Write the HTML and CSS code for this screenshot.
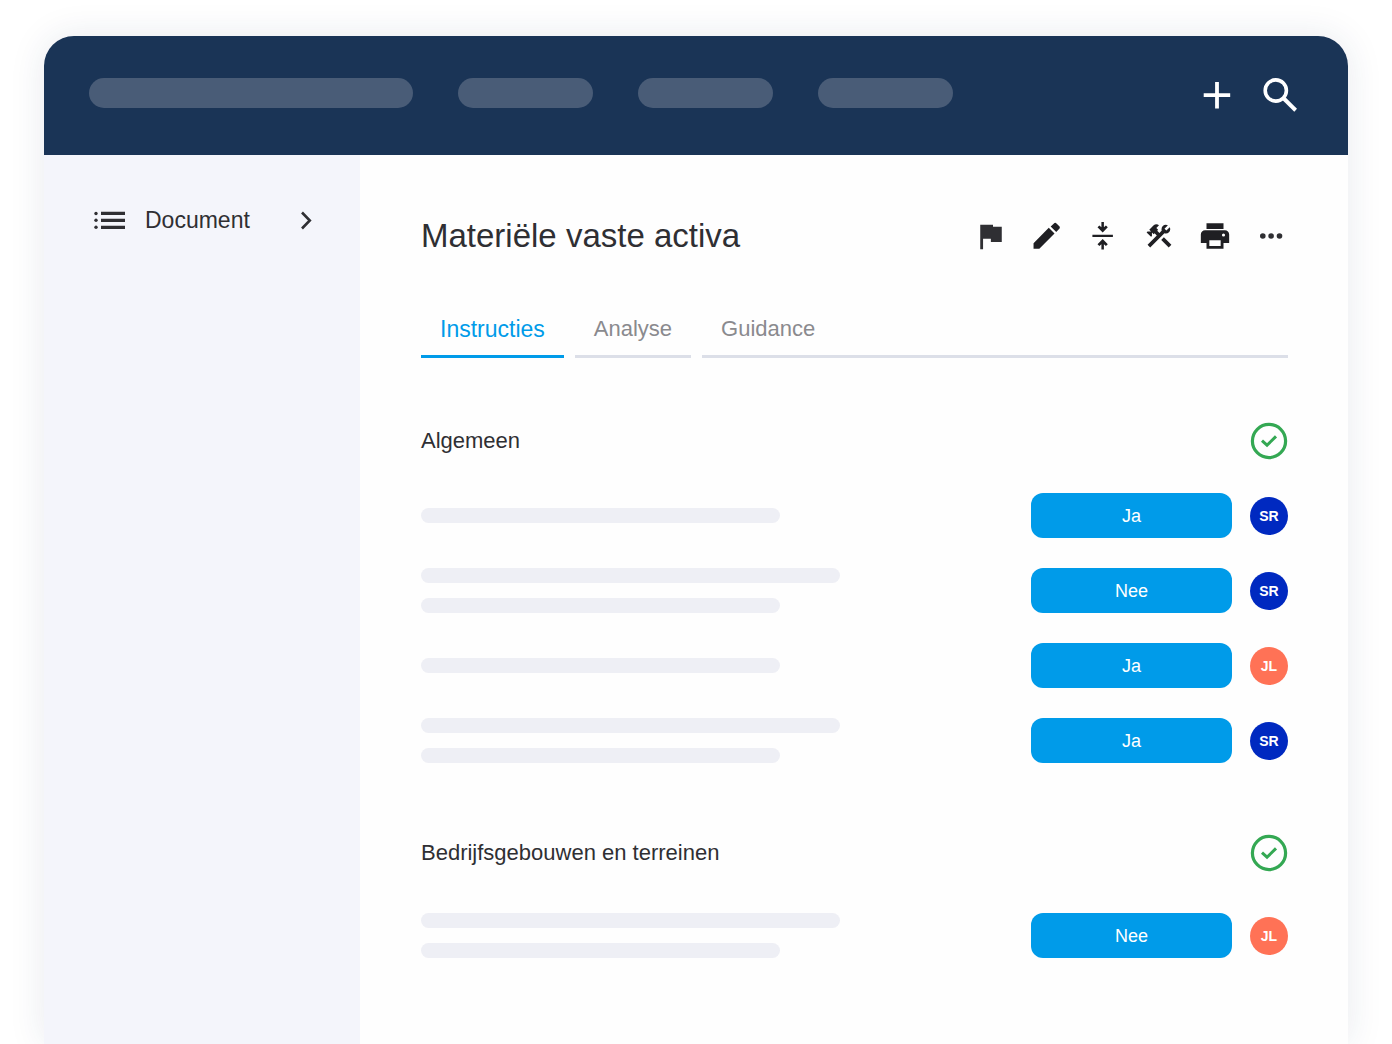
FILE: index.html
```html
<!DOCTYPE html>
<html lang="nl">
<head>
<meta charset="utf-8">
<meta name="viewport" content="width=device-width, initial-scale=1">
<title>Materiële vaste activa</title>
<link rel="stylesheet" href="styles.css">
</head>
<body>
<div class="app">
  <header class="topbar">
    <div class="topbar-nav">
      <span class="pill pill-wide"></span>
      <span class="pill"></span>
      <span class="pill"></span>
      <span class="pill"></span>
    </div>
    <div class="topbar-actions">
      <button class="icon-button" aria-label="Toevoegen">
        <svg width="34" height="34" viewBox="0 0 34 34"><path d="M17 4v26.500M3.700 17.100h26.500" stroke="#fff" stroke-width="3.800"/></svg>
      </button>
      <button class="icon-button" aria-label="Zoeken">
        <svg width="34" height="34" viewBox="0 0 34 34" fill="none" stroke="#fff"><circle cx="12.800" cy="12.500" r="10.600" stroke-width="3.600"/><path d="M20 19.800l12.700 12.400" stroke-width="4"/></svg>
      </button>
    </div>
  </header>

  <div class="body">
    <nav class="sidebar">
      <button class="sidebar-item">
        <svg width="32" height="20" viewBox="0 0 32 20" fill="#2f2f33"><circle cx="2" cy="3.500" r="1.700"/><circle cx="2" cy="10.300" r="1.700"/><circle cx="2" cy="17.300" r="1.700"/><path d="M7 1.800h24v3.200H7zM7 8.800h24v3.200H7zM7 15.800h24v3.200H7z"/></svg>
        <span>Document</span>
        <svg class="chevron" width="12" height="20" viewBox="0 0 12 20" fill="none" stroke="#2f2f33" stroke-width="2.600"><path d="M2 2.500l7.800 8L2 18.500"/></svg>
      </button>
    </nav>

    <main class="main">
      <div class="title-row">
        <h1 class="title">Materiële vaste activa</h1>
        <div class="toolbar">
          <button class="icon-button" aria-label="Markeren"><svg width="34" height="34" viewBox="0 0 24 24" fill="#2f2f33"><path d="M13.400 5.500V4H4.400v17.300h2V14h5.500v2.300h7.700V5.500z"/></svg></button>
          <button class="icon-button" aria-label="Bewerken"><svg width="34" height="34" viewBox="0 0 24 24" fill="#1f1f23"><path d="M2.500 17.050V21h4.100L17.300 10.200l-4.050-4.050zM20.700 6.900c.5-.5.5-1.300 0-1.800l-2-2c-.5-.5-1.300-.5-1.800 0l-2.300 2.200 3.900 3.900z"/></svg></button>
          <button class="icon-button" aria-label="Inklappen"><svg width="34" height="34" viewBox="0 0 34 34" fill="#1f1f23"><path d="M6.400 15.700h20.500v2.300H6.400zM15.400 3h2.500v5.200l2-1.700 1.900 1.700-5.100 5.300-5.200-5.300 1.900-1.700 2 1.700zM15.400 30.500h2.500v-5.200l2 1.700 1.900-1.700-5.100-5.300-5.200 5.300 1.900 1.700 2-1.700z"/></svg></button>
          <button class="icon-button" aria-label="Hulpmiddelen"><svg width="34" height="34" viewBox="-1.600 -1.600 27.200 27.200" fill="#1f1f23"><path d="M13.780 15.170l2.120-2.120 6 6-2.120 2.120z"/><path d="M17.500 10c1.930 0 3.500-1.570 3.500-3.500 0-.58-.16-1.120-.41-1.600l-2.700 2.700L16.400 6.110l2.700-2.700C18.620 3.160 18.080 3 17.500 3 15.570 3 14 4.570 14 6.500c0 .41.080.8.210 1.160l-1.850 1.850-1.780-1.780.71-.71-1.410-1.410L12 3.490c-1.170-1.170-3.070-1.170-4.240 0L4.220 7.030l1.410 1.410H2.810L2.100 9.150l3.540 3.540.71-.71V9.150l1.410 1.410.71-.71 1.780 1.780-7.410 7.410 2.120 2.120L16.340 9.790c.36.130.75.210 1.160.21z"/></svg></button>
          <button class="icon-button" aria-label="Afdrukken"><svg width="34" height="34" viewBox="0 0 24 24" fill="#1f1f23" fill-rule="evenodd"><path d="M6 3h12v4H6z"/><path d="M19 8H5c-1.660 0-3 1.340-3 3v6h4v4h12v-4h4v-6c0-1.660-1.340-3-3-3zm-3 11H8v-4h8v4zm2-6.600a1.100 1.100 0 1 1 0-2.200 1.100 1.100 0 0 1 0 2.200z"/></svg></button>
          <button class="icon-button" aria-label="Meer"><svg width="34" height="34" viewBox="0 0 34 34" fill="#2f2f33"><circle cx="8.800" cy="17" r="2.800"/><circle cx="17.100" cy="17" r="2.800"/><circle cx="25.500" cy="17" r="2.800"/></svg></button>
        </div>
      </div>

      <div class="tabs" role="tablist">
        <button class="tab tab-active" role="tab" aria-selected="true">Instructies</button>
        <button class="tab" role="tab" aria-selected="false">Analyse</button>
        <button class="tab tab-last" role="tab" aria-selected="false">Guidance</button>
      </div>

      <section class="section">
        <div class="section-head">
          <h2 class="section-title">Algemeen</h2>
          <svg width="38" height="38" viewBox="0 0 38 38" fill="none" stroke="#34a853"><circle cx="19" cy="19" r="16.600" stroke-width="3.200"/><path d="M12 18.700l5 4.500 9-8.800" stroke-width="3"/></svg>
        </div>
        <div class="rows">
          <div class="row">
            <div class="lines"><span class="line"></span></div>
            <button class="answer">Ja</button><span class="avatar avatar-blue">SR</span>
          </div>
          <div class="row">
            <div class="lines"><span class="line line-long"></span><span class="line"></span></div>
            <button class="answer">Nee</button><span class="avatar avatar-blue">SR</span>
          </div>
          <div class="row">
            <div class="lines"><span class="line"></span></div>
            <button class="answer">Ja</button><span class="avatar avatar-coral">JL</span>
          </div>
          <div class="row">
            <div class="lines"><span class="line line-long"></span><span class="line"></span></div>
            <button class="answer">Ja</button><span class="avatar avatar-blue">SR</span>
          </div>
        </div>
      </section>

      <section class="section">
        <div class="section-head">
          <h2 class="section-title">Bedrijfsgebouwen en terreinen</h2>
          <svg width="38" height="38" viewBox="0 0 38 38" fill="none" stroke="#34a853"><circle cx="19" cy="19" r="16.600" stroke-width="3.200"/><path d="M12 18.700l5 4.500 9-8.800" stroke-width="3"/></svg>
        </div>
        <div class="rows">
          <div class="row">
            <div class="lines"><span class="line line-long"></span><span class="line"></span></div>
            <button class="answer">Nee</button><span class="avatar avatar-coral">JL</span>
          </div>
        </div>
      </section>
    </main>
  </div>
</div>
</body>
</html>
```
FILE: styles.css
```css
* {
  box-sizing: border-box;
}

body {
  margin: 0;
  min-height: 100vh;
  display: flex;
  flex-direction: column;
  padding: 36px 44px 0;
  background: #fff;
  color: #2f2f33;
  font-family: "Liberation Sans", Arial, sans-serif;
  font-size: 22px;
  line-height: 28px;
}

button {
  margin: 0;
  padding: 0;
  border: 0;
  background: none;
  color: inherit;
  font: inherit;
  cursor: pointer;
}

svg {
  display: block;
  flex: none;
}

.app {
  flex: 1;
  display: flex;
  flex-direction: column;
  border-radius: 30px 30px 0 0;
  overflow: hidden;
  background: #fefefe;
  box-shadow: 0 0 36px rgba(30, 50, 90, 0.1);
}

.topbar {
  display: flex;
  justify-content: space-between;
  align-items: flex-start;
  padding: 42px 51px 43px 45px;
  background: #1a3456;
}

.topbar-nav {
  display: flex;
  gap: 45px;
}

.pill {
  width: 135px;
  height: 30px;
  border-radius: 15px;
  background: #495c77;
}

.pill-wide {
  width: 324px;
}

.topbar-actions {
  display: flex;
  gap: 29px;
}

.body {
  flex: 1;
  display: flex;
}

.sidebar {
  flex: none;
  width: 316px;
  padding: 48px 48px 48px 50px;
  background: #f4f5fb;
}

.sidebar-item {
  display: flex;
  align-items: center;
  gap: 19px;
  width: 100%;
  height: 34px;
  font-size: 23px;
}

.chevron {
  margin-left: auto;
}

.main {
  flex: 1;
  min-width: 0;
  padding: 60px 60px 72px 61px;
}

.title-row {
  display: flex;
  justify-content: space-between;
  align-items: center;
}

.title {
  margin: 0;
  font-size: 33px;
  line-height: 42px;
  font-weight: 400;
}

.toolbar {
  display: flex;
  gap: 22px;
}

.tabs {
  display: flex;
  gap: 11px;
  margin-top: 45px;
}

.tab {
  height: 56px;
  padding: 0 19px;
  border-bottom: 3px solid #dcdfe8;
  color: #8a8a8e;
}

.tab-active {
  border-color: #009be9;
  color: #009be9;
  font-size: 23px;
}

.tab-last {
  flex: 1;
  text-align: left;
}

.section {
  display: grid;
  gap: 33px;
  margin-top: 64px;
}

.section + .section {
  gap: 41px;
  margin-top: 71px;
}

.section-head {
  display: flex;
  justify-content: space-between;
  align-items: center;
}

.section-title {
  margin: 0;
  font-size: 22px;
  line-height: 28px;
  font-weight: 400;
}

.rows {
  display: grid;
  gap: 30px;
}

.row {
  display: flex;
  align-items: center;
  gap: 18px;
}

.lines {
  flex: 1;
  display: grid;
  gap: 15px;
}

.line {
  width: 100%;
  max-width: 359px;
  height: 15px;
  border-radius: 8px;
  background: #eeeff5;
}

.line-long {
  max-width: 419px;
}

.answer {
  width: 201px;
  height: 45px;
  border-radius: 12px;
  background: #009be9;
  color: #fff;
  font-size: 18px;
}

.avatar {
  display: grid;
  place-items: center;
  width: 38px;
  height: 38px;
  border-radius: 50%;
  color: #fff;
  font-size: 14px;
  font-weight: 700;
}

.avatar-blue {
  background: #0029c0;
}

.avatar-coral {
  background: #ff7256;
}
```
